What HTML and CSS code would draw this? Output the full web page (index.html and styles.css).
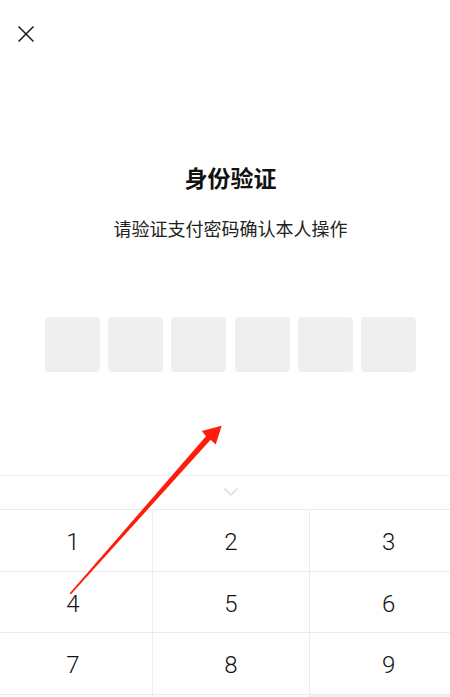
FILE: index.html
```html
<!DOCTYPE html>
<html lang="zh-CN">
<head>
<meta charset="utf-8">
<title>身份验证</title>
<link rel="stylesheet" href="styles.css">
</head>
<body>
<div class="screen">
  <section class="top">
    <div class="header">
      <svg class="close" width="16" height="16" viewBox="0 0 16 16"><path d="M0.5 0.5 L15.5 15.5 M15.5 0.5 L0.5 15.5" stroke="#1a1a1a" stroke-width="1.5" fill="none"/></svg>
    </div>
    <h1 class="title">身份验证</h1>
    <p class="subtitle">请验证支付密码确认本人操作</p>
    <div class="pins">
      <span class="pin"></span><span class="pin"></span><span class="pin"></span><span class="pin"></span><span class="pin"></span><span class="pin"></span>
    </div>
  </section>
  <section class="keyboard">
    <div class="strip">
      <svg class="chev" width="14" height="8" viewBox="0 0 14 8"><path d="M0.5 0.5 L7 7 L13.5 0.5" stroke="#d6d6d6" stroke-width="1.2" fill="none"/></svg>
    </div>
    <div class="row"><div class="key">1</div><div class="key">2</div><div class="key">3</div></div>
    <div class="row"><div class="key">4</div><div class="key">5</div><div class="key">6</div></div>
    <div class="row"><div class="key">7</div><div class="key">8</div><div class="key">9</div></div>
    <div class="row"><div class="key"></div><div class="key"></div><div class="key gray"></div></div>
  </section>
</div>
<svg class="arrow" width="450" height="697" viewBox="0 0 450 697">
  <polygon points="69.5,593.5 206,436.3 201.8,431 221.7,425.7 215.7,444.5 210.6,439.8 71,594.2" fill="#ff1c0a"/>
</svg>
</body>
</html>
```
FILE: styles.css
```css
html, body {
  margin: 0;
  padding: 0;
  width: 450px;
  height: 697px;
  overflow: hidden;
  background: #fff;
}
body {
  position: relative;
  font-family: "Noto Sans CJK SC", "Liberation Sans", sans-serif;
  color: #111;
}
.screen {
  width: 473px;
  margin-left: -6px;
}
.top {
  height: 475px;
  display: flex;
  flex-direction: column;
  align-items: center;
}
.header {
  align-self: stretch;
  height: 68px;
  padding: 26px 0 0 24px;
  box-sizing: border-box;
}
.close {
  display: block;
}
.title {
  margin: 93px 0 0;
  font-size: 23px;
  line-height: 32px;
  font-weight: 700;
  color: #111;
}
.subtitle {
  margin: 22px 0 0;
  font-size: 18px;
  line-height: 26px;
  color: #222;
}
.pins {
  margin-top: 76px;
  display: flex;
  gap: 8.4px;
}
.pin {
  width: 55px;
  height: 55px;
  border-radius: 4px;
  background: #efefef;
}
.keyboard {
  border-top: 1px solid #efefef;
}
.strip {
  height: 33px;
  display: flex;
  align-items: center;
  justify-content: center;
  padding-bottom: 2px;
  box-sizing: border-box;
}
.chev {
  display: block;
}
.row {
  display: grid;
  grid-template-columns: 1fr 1fr 1fr;
  border-top: 1px solid #ececec;
  height: 61.5px;
  box-sizing: border-box;
}
.key {
  display: flex;
  align-items: center;
  justify-content: center;
  padding-top: 4px;
  box-sizing: border-box;
  font-family: Roboto, "Liberation Sans", sans-serif;
  font-weight: 300;
  font-size: 24px;
  color: #111;
  border-left: 1px solid #ececec;
}
.key:first-child {
  border-left: none;
}
.key.gray {
  background: #efefef;
}
.arrow {
  position: absolute;
  left: 0;
  top: 0;
  pointer-events: none;
}
```
